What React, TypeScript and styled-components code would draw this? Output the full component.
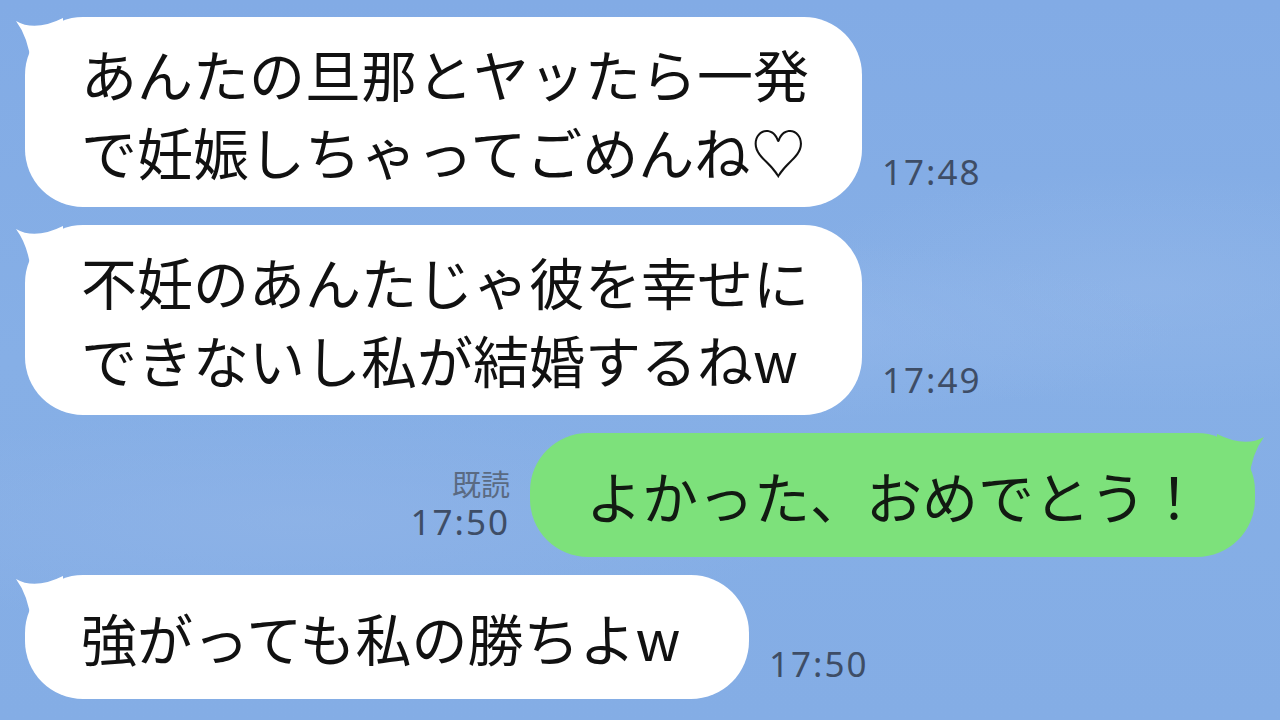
import React from "react";
import styled, { createGlobalStyle } from "styled-components";

interface IMessage {
  id: number;
  mine: boolean;
  lines: string[];
  time: string;
  read?: boolean;
  width: number;
}

const messages: IMessage[] = [
  {
    id: 1,
    mine: false,
    lines: ["あんたの旦那とヤッたら一発", "で妊娠しちゃってごめんね♡"],
    time: "17:48",
    width: 837,
  },
  {
    id: 2,
    mine: false,
    lines: ["不妊のあんたじゃ彼を幸せに", "できないし私が結婚するねw"],
    time: "17:49",
    width: 837,
  },
  {
    id: 3,
    mine: true,
    lines: ["よかった、おめでとう！"],
    time: "17:50",
    read: true,
    width: 725,
  },
  {
    id: 4,
    mine: false,
    lines: ["強がっても私の勝ちよw"],
    time: "17:50",
    width: 724,
  },
];

const GlobalStyle = createGlobalStyle`
  html, body {
    margin: 0;
    padding: 0;
  }
  body {
    width: 1280px;
    height: 720px;
    overflow: hidden;
    font-family: "Noto Sans CJK JP", "Noto Sans", sans-serif;
  }
`;

const Tail = ({ mine }: { mine: boolean }) => (
  <TailSvg $mine={mine} width="50" height="46" viewBox="0 0 50 46">
    <path d="M3 4 Q22 15 50 1 L50 46 L18 46 Q15 20 3 4 Z" />
  </TailSvg>
);

const App = () => {
  return (
    <>
      <GlobalStyle />
      <ChatArea>
        {messages.map((message) => (
          <Row key={message.id} $mine={message.mine}>
            {message.mine && (
              <Meta $mine>
                {message.read && <ReadLabel>既読</ReadLabel>}
                <Time>{message.time}</Time>
              </Meta>
            )}
            <Bubble $mine={message.mine} $width={message.width}>
              <Tail mine={message.mine} />
              {message.lines.map((line) => (
                <Line key={line}>{line}</Line>
              ))}
            </Bubble>
            {!message.mine && (
              <Meta $mine={false}>
                <Time>{message.time}</Time>
              </Meta>
            )}
          </Row>
        ))}
      </ChatArea>
    </>
  );
};

export const ChatArea = styled.div`
  width: 1280px;
  height: 720px;
  box-sizing: border-box;
  padding: 17px 25px;
  display: flex;
  flex-direction: column;
  gap: 18px;
  background-color: #84ade6;
  background-image: radial-gradient(
      ellipse 420px 90px at 760px 330px,
      rgba(150, 185, 235, 0.55),
      rgba(150, 185, 235, 0) 100%
    ),
    radial-gradient(
      ellipse 520px 110px at 300px 520px,
      rgba(148, 182, 232, 0.5),
      rgba(148, 182, 232, 0) 100%
    ),
    radial-gradient(
      ellipse 380px 120px at 1150px 290px,
      rgba(152, 186, 234, 0.45),
      rgba(152, 186, 234, 0) 100%
    ),
    linear-gradient(180deg, #82abe5 0%, #86afe6 50%, #84ade5 100%);
`;

export const Row = styled.div<{ $mine: boolean }>`
  display: flex;
  align-items: flex-end;
  justify-content: ${(props) => (props.$mine ? "flex-end" : "flex-start")};
  gap: 20px;
`;

export const Bubble = styled.div<{ $mine: boolean; $width: number }>`
  position: relative;
  box-sizing: border-box;
  width: ${(props) => props.$width}px;
  min-height: 124px;
  padding: 17px 54px 17px 56px;
  border-radius: 58px;
  background: ${(props) => (props.$mine ? "#7de17b" : "#ffffff")};
  color: ${(props) => (props.$mine ? "#121a12" : "#111111")};
  display: flex;
  flex-direction: column;
  justify-content: center;

  svg {
    fill: ${(props) => (props.$mine ? "#7de17b" : "#ffffff")};
  }
`;

export const TailSvg = styled.svg<{ $mine: boolean }>`
  position: absolute;
  top: 0;
  ${(props) => (props.$mine ? "right: -12px;" : "left: -12px;")}
  transform: ${(props) => (props.$mine ? "scaleX(-1)" : "none")};
`;

export const Line = styled.div`
  font-family: "Noto Sans CJK JP", sans-serif;
  font-size: 56px;
  line-height: 78px;
  white-space: nowrap;
`;

export const Meta = styled.div<{ $mine: boolean }>`
  display: flex;
  flex-direction: column;
  align-items: ${(props) => (props.$mine ? "flex-end" : "flex-start")};
  gap: 2px;
  margin-bottom: 14px;
`;

export const ReadLabel = styled.span`
  font-family: "Noto Sans CJK JP", sans-serif;
  font-size: 29px;
  line-height: 32px;
  color: #5a6a82;
`;

export const Time = styled.span`
  font-family: "Noto Sans", sans-serif;
  font-size: 35px;
  line-height: 42px;
  letter-spacing: 2px;
  color: #3e4d66;
`;

export default App;
